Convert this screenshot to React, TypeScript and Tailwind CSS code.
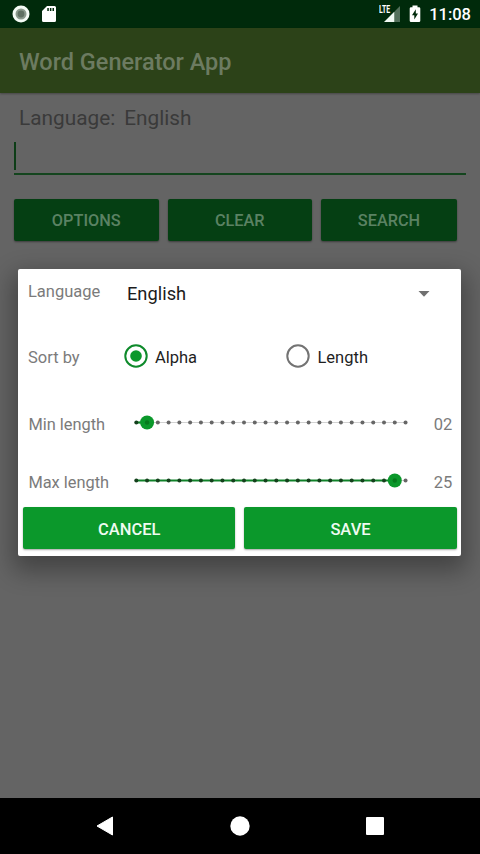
// Word Generator App, options dialog open over the search screen

const TICKS = Array.from({ length: 26 }, (_, i) => i);
const TICK_GAP = 10.77;

function StatusBar() {
  return (
    <div className="flex h-7 items-center bg-[#002a0b] pl-3 pr-[9px] text-white">
      <svg width="18" height="18" viewBox="0 0 18 18">
        <circle cx="9" cy="9" r="8.5" fill="#f4fbf5" />
        <circle cx="9" cy="9" r="5.5" fill="#8b9a8d" />
        <circle cx="9" cy="9" r="3.4" fill="#5f7062" />
      </svg>
      <svg className="ml-3" width="14" height="18" viewBox="0 0 14 18">
        <path d="M5 1h7.5A1.5 1.5 0 0 1 14 2.5v13A1.5 1.5 0 0 1 12.5 17h-11A1.5 1.5 0 0 1 0 15.5V6z" fill="#fff" />
        <path d="M5.3 3h1.5v3H5.3zM7.9 3h1.5v3H7.9zM10.5 3H12v3h-1.5z" fill="#002a0b" />
      </svg>
      <div className="relative ml-auto h-[18px] w-[22px]">
        <span className="absolute left-0 top-px origin-left scale-x-[0.66] text-[10.5px] font-bold leading-[8px]">LTE</span>
        <svg className="absolute left-[5px] top-0" width="17" height="18" viewBox="0 0 17 18">
          <path d="M16 1v16h-5V6z" fill="#54705b" />
          <path d="M10.5 6.5V17H0z" fill="#f2faf3" />
        </svg>
      </div>
      <svg className="ml-2" width="12" height="18" viewBox="0 0 12 18">
        <path d="M3.5 0.5h5v1.7H10A1.3 1.3 0 0 1 11.3 3.5v12.2A1.3 1.3 0 0 1 10 17H2A1.3 1.3 0 0 1 .7 15.7V3.5A1.3 1.3 0 0 1 2 2.2h1.5z" fill="#fff" />
        <path d="M6.8 4.3 3 10.2h2.3v4.3L9 8.5H6.8z" fill="#002a0b" />
      </svg>
      <span className="ml-2 pt-[2px] text-[16.5px] font-medium leading-[26px]">11:08</span>
    </div>
  );
}

function DimButton({ label, width }: { label: string; width: string }) {
  return (
    <button
      className={`${width} h-[42px] rounded-[2px] bg-[#053f13] pt-[3px] text-[16.3px] font-medium text-[#5b8263] shadow-[0_1px_2px_rgba(0,0,0,0.4)]`}
    >
      {label}
    </button>
  );
}

function Radio({ label, checked }: { label: string; checked?: boolean }) {
  return (
    <div className="flex w-[162.5px] items-center gap-[7px]">
      <svg width="24" height="24" viewBox="0 0 24 24" fill="none">
        <circle cx="12" cy="12" r="10.7" stroke={checked ? "#0e8a2b" : "#737373"} strokeWidth="2" />
        {checked && <circle cx="12" cy="12" r="5.8" fill="#0b982b" />}
      </svg>
      <span className="pt-[3px] text-[16.5px] text-[#1f1f1f]">{label}</span>
    </div>
  );
}

function LengthSlider({ value }: { value: number }) {
  const thumb = 10.3 + value * TICK_GAP;
  return (
    <svg width="290" height="20" viewBox="0 0 290 20">
      <path d="M10.3 9.5H279.5" stroke="#d2d2d2" strokeWidth="1.2" />
      <path d={`M10.3 9.5H${thumb}`} stroke="#0f8228" strokeWidth="2.2" />
      {TICKS.map((i) => (
        <circle
          key={i}
          cx={10.3 + i * TICK_GAP}
          cy="9.5"
          r="2"
          fill={i > value ? "#666666" : "#14401c"}
        />
      ))}
      <circle cx={thumb} cy="9.5" r="7" fill="#0b982b" />
      <circle cx={thumb} cy="9.5" r="2.2" fill="#067a1d" />
    </svg>
  );
}

function SliderRow({ label, value, display }: { label: string; value: number; display: string }) {
  return (
    <div className="flex h-[58px] items-center pl-[10px] pr-[9px]">
      <span className="w-[98px] pt-1 text-[16.4px] text-[#7b7b7b]">{label}</span>
      <LengthSlider value={value} />
      <span className="ml-auto pt-1 text-[16.5px] text-[#7b7b7b]">{display}</span>
    </div>
  );
}

function DialogButton({ label }: { label: string }) {
  return (
    <button className="h-[42px] flex-1 rounded-[2px] bg-[#0b982b] pt-[4px] text-[16.5px] font-medium text-[#effbf1] shadow-[0_1px_2px_rgba(0,0,0,0.35)]">
      {label}
    </button>
  );
}

function OptionsDialog() {
  return (
    <div className="absolute left-[18.4px] top-[269.4px] h-[287px] w-[443px] rounded-[2px] bg-white shadow-[0_10px_24px_5px_rgba(0,0,0,0.33)]">
      <div className="flex h-[49px] items-center pl-[9.6px] pr-[31px]">
        <span className="w-[99px] pb-[3px] text-[16.5px] text-[#7b7b7b]">Language</span>
        <span className="text-[18.3px] text-[#1c1c1c]">English</span>
        <svg className="ml-auto" width="12" height="6" viewBox="0 0 12 6">
          <path d="M.5 0h11L6 5.8z" fill="#707070" />
        </svg>
      </div>

      <div className="flex h-[76px] items-center pl-[9.6px]">
        <span className="w-[96px] pt-[3px] text-[16.5px] text-[#7b7b7b]">Sort by</span>
        <Radio label="Alpha" checked />
        <Radio label="Length" />
      </div>

      <SliderRow label="Min length" value={1} display="02" />
      <SliderRow label="Max length" value={24} display="25" />

      <div className="-mt-[3px] flex gap-[9px] px-[4.8px]">
        <DialogButton label="CANCEL" />
        <DialogButton label="SAVE" />
      </div>
    </div>
  );
}

export default function App() {
  return (
    <div className="relative flex h-[854px] w-[480px] flex-col overflow-hidden bg-[#646464] font-['Roboto','Liberation_Sans',sans-serif]">
      <StatusBar />
      <header className="flex h-[65px] items-center bg-[#2c4218] pl-[19px] pt-[5px] text-[23.5px] font-medium text-[#6c7b61] shadow-[0_1px_2px_rgba(0,0,0,0.3)]">
        Word Generator App
      </header>

      <main className="flex-1 px-[14px]">
        <div className="flex h-[49px] items-center gap-[9px] pl-[5px] pt-[2px] text-[20.8px] text-[#3a3a3a]">
          <span>Language:</span>
          <span>English</span>
        </div>
        <div className="h-[33px] border-b-2 border-[#14451e]">
          <div className="h-[28px] w-[2px] bg-[#0d3d17]" />
        </div>
        <div className="mt-6 flex gap-[9px]">
          <DimButton label="OPTIONS" width="w-[144.5px]" />
          <DimButton label="CLEAR" width="w-[144.5px]" />
          <DimButton label="SEARCH" width="w-[136px]" />
        </div>
      </main>

      {/* System navigation */}
      <nav className="flex h-14 items-center bg-black pl-[96px]">
        <svg width="18" height="20" viewBox="0 0 18 20">
          <path d="M16.5 1v18L1 10z" fill="#fff" stroke="#fff" strokeLinejoin="round" />
        </svg>
        <svg className="ml-[116px]" width="20" height="20" viewBox="0 0 20 20">
          <circle cx="10" cy="10" r="9.7" fill="#fff" />
        </svg>
        <svg className="ml-[116px]" width="18" height="18" viewBox="0 0 18 18">
          <rect width="18" height="18" rx="1" fill="#fff" />
        </svg>
      </nav>

      <OptionsDialog />
    </div>
  );
}
